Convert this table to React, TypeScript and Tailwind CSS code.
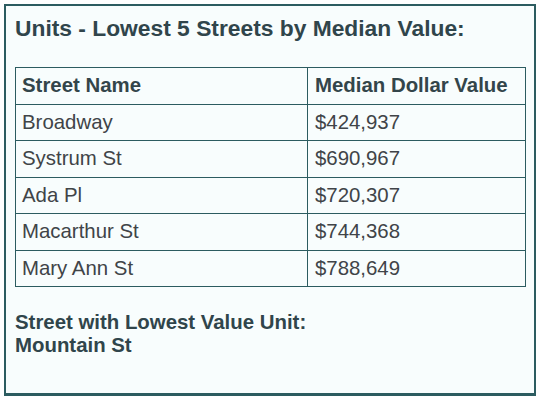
export default function App() {
  const rows = [
    { street: 'Broadway', value: '$424,937' },
    { street: 'Systrum St', value: '$690,967' },
    { street: 'Ada Pl', value: '$720,307' },
    { street: 'Macarthur St', value: '$744,368' },
    { street: 'Mary Ann St', value: '$788,649' },
  ]

  return (
    <div className="w-[541px] h-[402px] bg-white p-[4px] font-['Liberation_Sans',Arial,sans-serif]">
      <div className="w-[532px] h-[392px] border-2 border-b-[3px] border-[#2c5c60] bg-[#f8fdfd] pt-[9px] pl-[9px] pr-[10px]">
        <h1 className="text-[22.8px] leading-[27px] font-bold text-[#30454b]">
          Units - Lowest 5 Streets by Median Value:
        </h1>

        <table className="mt-[25px] w-[511px] border-collapse border border-[#2c5c60] text-[20.4px] leading-[24.5px]">
          <thead>
            <tr>
              <th className="w-[292px] border border-[#2c5c60] pt-[5px] pb-[6px] px-[6px] text-left font-bold text-[#33454a]">
                Street Name
              </th>
              <th className="border border-[#2c5c60] pt-[5px] pb-[6px] px-[7px] text-left font-bold text-[#33454a]">
                Median Dollar Value
              </th>
            </tr>
          </thead>
          <tbody>
            {rows.map((r) => (
              <tr key={r.street}>
                <td className="border border-[#2c5c60] pt-[5px] pb-[6px] px-[6px] text-[#404448]">{r.street}</td>
                <td className="border border-[#2c5c60] pt-[5px] pb-[6px] px-[7px] text-[#404448]">{r.value}</td>
              </tr>
            ))}
          </tbody>
        </table>

        <div className="mt-[24px] text-[20.4px] leading-[23px] font-bold text-[#30454b]">
          <div>Street with Lowest Value Unit:</div>
          <div>Mountain St</div>
        </div>
      </div>
    </div>
  )
}
